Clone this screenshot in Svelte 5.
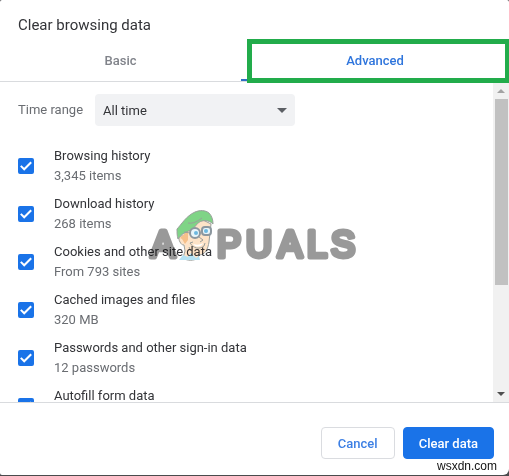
<script>
    let activeTab = 'advanced';
    let timeRange = 'all';

    const ranges = [
        { value: 'hour', label: 'Last hour' },
        { value: 'day', label: 'Last 24 hours' },
        { value: 'week', label: 'Last 7 days' },
        { value: 'month', label: 'Last 4 weeks' },
        { value: 'all', label: 'All time' },
    ];

    let items = [
        { id: 'history', title: 'Browsing history', detail: '3,345 items', checked: true },
        { id: 'downloads', title: 'Download history', detail: '268 items', checked: true },
        { id: 'cookies', title: 'Cookies and other site data', detail: 'From 793 sites', checked: true },
        { id: 'cache', title: 'Cached images and files', detail: '320 MB', checked: true },
        { id: 'passwords', title: 'Passwords and other sign-in data', detail: '12 passwords', checked: true },
        { id: 'autofill', title: 'Autofill form data', detail: '', checked: true },
    ];
</script>

<div class="backdrop">
    <div class="dialog" role="dialog" aria-labelledby="dialog-title">
        <h1 id="dialog-title">Clear browsing data</h1>

        <div class="tabs" role="tablist">
            <button
                class="tab basic"
                class:active={activeTab === 'basic'}
                role="tab"
                aria-selected={activeTab === 'basic'}
                on:click={() => (activeTab = 'basic')}
            >
                Basic
            </button>
            <button
                class="tab advanced"
                class:active={activeTab === 'advanced'}
                role="tab"
                aria-selected={activeTab === 'advanced'}
                on:click={() => (activeTab = 'advanced')}
            >
                Advanced
                <span class="highlight"></span>
            </button>
        </div>

        <div class="body">
            <div class="content">
                <div class="range">
                    <label for="time-range">Time range</label>
                    <div class="select">
                        <select id="time-range" bind:value={timeRange}>
                            {#each ranges as range}
                                <option value={range.value}>{range.label}</option>
                            {/each}
                        </select>
                        <svg class="caret" viewBox="0 0 10 5" aria-hidden="true">
                            <path d="M0 0h10L5 5z" />
                        </svg>
                    </div>
                </div>

                <div class="list">
                    {#each items as item (item.id)}
                        <label class="item">
                            <span class="box">
                                <input type="checkbox" bind:checked={item.checked} />
                                {#if item.checked}
                                    <svg class="tick" viewBox="0 0 16 16" aria-hidden="true">
                                        <path d="M2.8 7.9l3.4 3.4 7-7" />
                                    </svg>
                                {/if}
                            </span>
                            <span class="text">
                                <span class="title">{item.title}</span>
                                <span class="detail">{item.detail}</span>
                            </span>
                        </label>
                    {/each}
                </div>
            </div>

            <div class="scrollbar" aria-hidden="true">
                <svg class="arrow up" viewBox="0 0 8 4"><path d="M0 4h8L4 0z" /></svg>
                <div class="rail"><div class="thumb"></div></div>
                <svg class="arrow down" viewBox="0 0 8 4"><path d="M0 0h8L4 4z" /></svg>
            </div>
        </div>

        <div class="actions">
            <button class="cancel">Cancel</button>
            <button class="clear">Clear data</button>
        </div>
    </div>

    <svg class="watermark" viewBox="0 0 216 64" aria-label="Appuals">
        <g class="letters">
            <text x="4" y="48">A</text>
            <text x="70" y="48">P</text>
            <text x="99" y="48">U</text>
            <text x="131" y="48">A</text>
            <text x="160" y="48">L</text>
            <text x="184" y="48">S</text>
        </g>
        <g class="face">
            <path class="skin" d="M36 27c-4-1-5 3-3 6 1 2 2 3 4 3l1 6-2 7c4 3 11 3 15 0l1-3c6 0 9-6 10-13l2-18-10-5-10 8z" />
            <path class="shirt" d="M36 46l-4 5h21l-1-4-3 2-5-5-3 4z" />
            <path class="hair" d="M33 29l8-8v10l-3 4-3-5z" />
            <path class="cap" d="M31 30c-1-3-1-7-1-10C34 16 39 7 48 3c5-2 10-2 14 1 3 3 4 7 4 11-3-3-7-4-11-3-5 1-6 6-11 9-5 2-10 4-13 9z" />
            <path class="line" d="M41 14c5 1 10-2 14-5" />
            <circle class="lens" cx="48" cy="24" r="5" />
            <rect class="lens" x="55" y="18" width="9" height="8" rx="3" />
            <path class="line" d="M43 24l-6-1M52 28l4 3-3 2M43 34c3 5 9 7 14 3l1-3M43 34l3-1M42 38l2 4" />
            <circle class="pupil" cx="49" cy="24" r="2" />
            <circle class="pupil" cx="59" cy="22" r="2" />
            <path class="teeth" d="M46 35c4 1 7 1 10-1-1 4-7 5-10 1z" />
        </g>
    </svg>

    <span class="source">wsxdn.com</span>
</div>

<style>
    :global(body) {
        margin: 0;
        background: #4a4b4d;
    }

    .backdrop {
        position: relative;
        box-sizing: border-box;
        height: 100vh;
        padding-bottom: 1px;
        background: #4a4b4d;
        font-family: Roboto, sans-serif;
        font-size: 13px;
        line-height: 20px;
        color: #333438;
    }

    .dialog {
        display: flex;
        flex-direction: column;
        height: 100%;
        overflow: hidden;
        border-radius: 2px 2px 6px 2px;
        background: #fff;
    }

    h1 {
        margin: 0;
        padding: 15px 18px 6px;
        font-size: 15px;
        font-weight: 400;
        line-height: 20px;
    }

    .tabs {
        display: flex;
        height: 40px;
        border-bottom: 1px solid #d9dbde;
    }

    button {
        font-family: inherit;
        font-size: 13px;
        font-weight: 500;
        cursor: pointer;
    }

    .tab {
        position: relative;
        padding: 0;
        border: none;
        border-bottom: 2px solid transparent;
        background: none;
        color: #80838a;
    }

    .basic {
        flex: 9;
    }

    .advanced {
        flex: 10;
    }

    .tab.active {
        border-bottom-color: #2f6fc4;
        color: #2f75dc;
    }

    /* callout frame drawn over the tab */
    .highlight {
        position: absolute;
        inset: -2px 0 -4px 6px;
        border: 5px solid #22ac4b;
        border-right-width: 4px;
    }

    .body {
        display: flex;
        flex: 1;
        min-height: 0;
    }

    .content {
        flex: 1;
        overflow: hidden;
        padding: 12px 18px 0;
    }

    .range {
        display: flex;
        align-items: center;
        gap: 12px;
        color: #6a6d72;
    }

    .select {
        position: relative;
        width: 200px;
    }

    select {
        width: 100%;
        height: 32px;
        padding: 0 8px;
        border: none;
        border-radius: 4px;
        appearance: none;
        background: #f1f2f4;
        color: #333438;
        font-family: inherit;
        font-size: 13px;
    }

    .caret {
        position: absolute;
        top: 14px;
        right: 8px;
        width: 10px;
        height: 5px;
        fill: #5c5f64;
        pointer-events: none;
    }

    .list {
        display: grid;
        gap: 8px;
        padding-top: 20px;
    }

    .item {
        display: flex;
        align-items: center;
        gap: 20px;
        height: 40px;
    }

    .box {
        position: relative;
        width: 16px;
        height: 16px;
    }

    input {
        display: block;
        width: 16px;
        height: 16px;
        margin: 0;
        border: 2px solid #5f6368;
        border-radius: 2px;
        appearance: none;
    }

    input:checked {
        border-color: #1a73e8;
        background: #1a73e8;
    }

    .tick {
        position: absolute;
        inset: 0;
        fill: none;
        stroke: #fff;
        stroke-width: 2;
        pointer-events: none;
    }

    .text {
        display: grid;
        grid-template-rows: 20px 20px;
    }

    .detail {
        color: #6a6d72;
    }

    .scrollbar {
        display: flex;
        flex-direction: column;
        align-items: center;
        width: 16px;
        background: #f1f1f1;
    }

    .arrow {
        width: 8px;
        height: 4px;
        padding: 7px 0 6px;
    }

    .up {
        fill: #a3a3a3;
    }

    .down {
        fill: #505050;
    }

    .rail {
        flex: 1;
        width: 13px;
    }

    .thumb {
        height: 65%;
        background: #c1c1c1;
    }

    .actions {
        display: flex;
        justify-content: flex-end;
        gap: 8px;
        padding: 24px 15px 16px;
        border-top: 1px solid #d9dbde;
    }

    .actions button {
        min-width: 74px;
        height: 32px;
        padding: 0 15px;
        border: 1px solid #dadce0;
        border-radius: 4px;
        background: #fff;
        color: #3c7fe4;
    }

    .actions .clear {
        border-color: #1a73e8;
        background: #1a73e8;
        color: #fff;
    }

    .watermark {
        position: absolute;
        top: 209px;
        left: 147px;
        width: 216px;
        height: 64px;
        mix-blend-mode: multiply;
        pointer-events: none;
    }

    .letters {
        fill: #999;
        stroke: #999;
        stroke-width: 5;
        stroke-linecap: round;
        stroke-linejoin: round;
        font-family: "Liberation Sans", sans-serif;
        font-size: 36px;
    }

    .face {
        stroke: #9a9f9c;
        stroke-width: 1;
        stroke-linejoin: round;
    }

    .skin {
        fill: #fde3c8;
    }

    .shirt {
        fill: #b4e2f4;
        stroke: none;
    }

    .hair {
        fill: #f6c08a;
        stroke: none;
    }

    .cap {
        fill: #7fd486;
    }

    .line {
        fill: none;
    }

    .lens {
        fill: #e8f5fa;
        stroke: #8c979f;
        stroke-width: 2;
    }

    .pupil {
        fill: #6cb8e0;
        stroke: none;
    }

    .teeth {
        fill: #fff;
        stroke: none;
    }

    .source {
        position: absolute;
        right: 12px;
        bottom: 0;
        color: #111;
        font-family: "Liberation Sans", sans-serif;
        font-size: 12px;
    }
</style>
